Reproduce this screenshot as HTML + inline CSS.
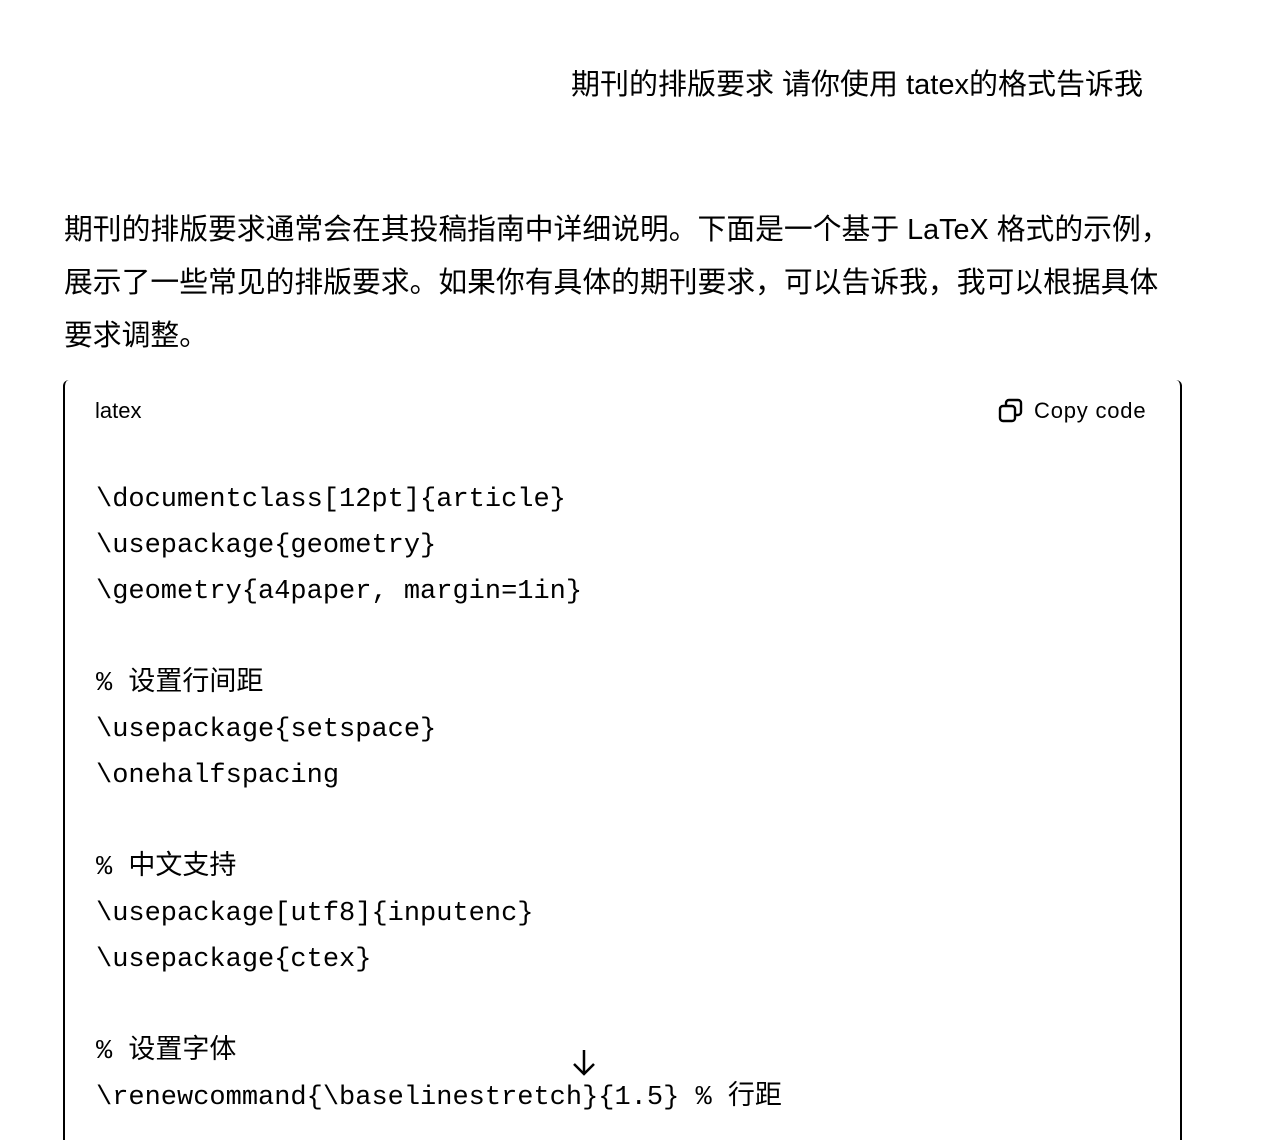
<!DOCTYPE html>
<html><head><meta charset="utf-8"><style>
body{margin:0;width:1280px;height:1096px;overflow:hidden;background:#fff;color:#000;font-family:"Liberation Sans","Noto Sans CJK SC",sans-serif;position:relative}
.q{position:absolute;right:137px;top:65px;font-size:29px;line-height:40px}
.p{position:absolute;left:64px;top:204px;font-size:28.8px;line-height:53px;white-space:nowrap}
.box{position:absolute;left:63px;top:380px;width:1115px;height:760px;border-left:2px solid #000;border-right:2px solid #000;border-radius:6px 6px 0 0}
.lang{position:absolute;left:95px;top:398px;font-size:22px}
.copy{position:absolute;left:998px;top:398px;font-size:22px;letter-spacing:0.8px;display:flex;align-items:center;gap:10px}
pre{position:absolute;left:96px;top:477px;margin:0;font-family:"Liberation Mono","Noto Sans CJK SC",monospace;font-size:27px;line-height:46px}
</style></head><body>
<div class="q">期刊的排版要求 请你使用 tatex的格式告诉我</div>
<div class="p">期刊的排版要求通常会在其投稿指南中详细说明。下面是一个基于 LaTeX 格式的示例，<br>展示了一些常见的排版要求。如果你有具体的期刊要求，可以告诉我，我可以根据具体<br>要求调整。</div>
<div class="box"></div>
<div class="lang">latex</div>
<div class="copy"><svg width="26" height="26" viewBox="0 0 26 26" fill="none" stroke="#000" stroke-width="2.4"><rect x="2" y="8" width="15" height="15" rx="3"/><path d="M8 8V5a3 3 0 0 1 3-3h9a3 3 0 0 1 3 3v9a3 3 0 0 1-3 3h-3"/></svg>Copy code</div>
<pre>\documentclass[12pt]{article}
\usepackage{geometry}
\geometry{a4paper, margin=1in}

% 设置行间距
\usepackage{setspace}
\onehalfspacing

% 中文支持
\usepackage[utf8]{inputenc}
\usepackage{ctex}

% 设置字体
\renewcommand{\baselinestretch}{1.5} % 行距</pre>
<svg style="position:absolute;left:570px;top:1048px" width="28" height="30" viewBox="0 0 28 30" fill="none" stroke="#000" stroke-width="2.5"><path d="M14 2v24M4 16l10 10 10-10"/></svg>
</body></html>
